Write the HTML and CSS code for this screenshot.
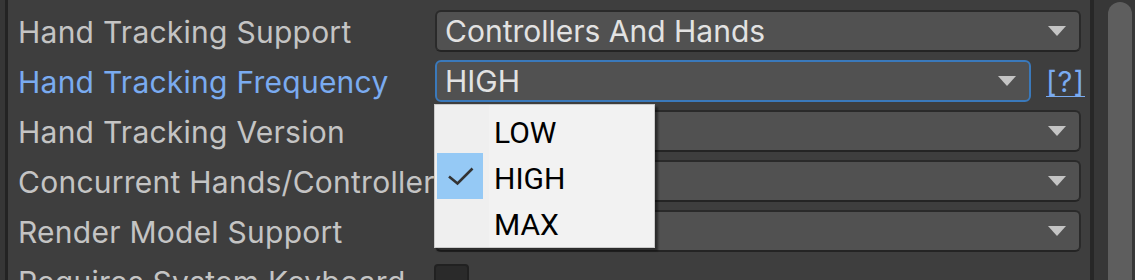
FILE: index.html
```html
<!DOCTYPE html>
<html lang="en">
<head>
    <meta charset="UTF-8">
    <meta name="viewport" content="width=device-width, initial-scale=1.0">
    <title>Hand Tracking Settings</title>
    <link rel="stylesheet" href="styles.css">
</head>
<body>
    <div class="inspector">
        <div class="edge"></div>

        <div class="fields">
            <div class="row">
                <span class="label">Hand Tracking Support</span>
                <div class="popup-field">
                    <span class="value">Controllers And Hands</span>
                    <i class="arrow"></i>
                </div>
            </div>

            <div class="row">
                <span class="label label-active">Hand Tracking Frequency</span>
                <div class="popup-field focused">
                    <span class="value">HIGH</span>
                    <i class="arrow"></i>
                </div>
                <a class="help" href="#">[?]</a>
            </div>

            <div class="row">
                <span class="label">Hand Tracking Version</span>
                <div class="popup-field">
                    <span class="value"></span>
                    <i class="arrow"></i>
                </div>
            </div>

            <div class="row">
                <span class="label">Concurrent Hands/Controllers</span>
                <div class="popup-field">
                    <span class="value"></span>
                    <i class="arrow"></i>
                </div>
            </div>

            <div class="row">
                <span class="label">Render Model Support</span>
                <div class="popup-field">
                    <span class="value"></span>
                    <i class="arrow"></i>
                </div>
            </div>

            <div class="row">
                <span class="label">Requires System Keyboard</span>
                <div class="toggle"></div>
            </div>
        </div>

        <div class="scroll">
            <div class="scroll-line"></div>
            <div class="scroll-track">
                <div class="scroll-thumb"></div>
            </div>
        </div>

        <!-- Open dropdown menu -->
        <ul class="menu">
            <li class="menu-item">
                <span class="check"></span>
                <span class="menu-text">LOW</span>
            </li>
            <li class="menu-item">
                <span class="check checked">
                    <svg width="46" height="46" viewBox="0 0 46 46">
                        <path d="M12 23.5 L20.5 30.5 L35.5 15.5" fill="none" stroke="#333" stroke-width="2.6"/>
                    </svg>
                </span>
                <span class="menu-text">HIGH</span>
            </li>
            <li class="menu-item">
                <span class="check"></span>
                <span class="menu-text">MAX</span>
            </li>
        </ul>
    </div>
</body>
</html>
```

FILE: styles.css
```css
body {
    margin: 0;
    padding: 0;
    background-color: #3e3e3e;
    font-family: Inter, "Noto Sans", sans-serif;
    overflow: hidden;
}

.inspector {
    display: flex;
    width: 1135px;
    height: 280px;
    overflow: hidden;
}

.edge {
    width: 5px;
    flex-shrink: 0;
    background-color: #363636;
    border-right: 3px solid #232323;
}

.fields {
    flex: 1;
    padding: 10px 0 0 10px;
}

.row {
    display: flex;
    align-items: center;
    height: 42px;
    margin-bottom: 8px;
}

.label {
    width: 417px;
    flex-shrink: 0;
    overflow: hidden;
    white-space: nowrap;
    padding-top: 1px;
    font-size: 30px;
    letter-spacing: 0.25px;
    color: #c4c4c4;
}

.label-active {
    color: #7aabf0;
}

.popup-field {
    flex: 1;
    display: flex;
    align-items: center;
    height: 38px;
    margin-right: 9px;
    padding-left: 8px;
    background-color: #515151;
    border: 2px solid #2a2a2a;
    border-bottom-color: #242424;
    border-radius: 6px;
    font-size: 30px;
    color: #e2e2e2;
}

.popup-field.focused {
    border-color: #3a79bb;
    margin-right: 0;
}

.value {
    white-space: nowrap;
}

.arrow {
    margin-left: auto;
    margin-right: 13px;
    width: 0;
    height: 0;
    border-left: 9px solid transparent;
    border-right: 9px solid transparent;
    border-top: 10px solid #c4c4c4;
}

.help {
    width: 36px;
    margin: 0 8px 0 15px;
    font-size: 29px;
    color: #7aabf0;
    text-decoration: underline;
    text-decoration-thickness: 1px;
    text-underline-offset: 4px;
    letter-spacing: 1px;
}

.toggle {
    width: 31px;
    height: 31px;
    margin-left: -1px;
    background-color: #2a2a2a;
    border: 2px solid #212121;
    border-radius: 4px;
}

.scroll {
    display: flex;
    width: 45px;
    flex-shrink: 0;
}

.scroll-line {
    width: 4px;
    background-color: #272727;
}

.scroll-track {
    flex: 1;
    padding: 2px 3px 0 14px;
    background-color: #373737;
}

.scroll-thumb {
    height: 400px;
    background-color: #5e5e5e;
    border-radius: 12px 12px 0 0;
}

/* dropdown menu, drawn over the fields */
.menu {
    position: absolute;
    left: 434px;
    top: 104px;
    width: 215px;
    margin: 0;
    padding: 2px;
    list-style: none;
    background: linear-gradient(to right, #efefef 54px, #f2f2f2 54px);
    border: 1px solid #cbcbcb;
    box-shadow: 3px 3px 2px rgba(0, 0, 0, 0.45);
    font-family: Roboto, "Noto Sans", sans-serif;
    font-size: 30px;
    color: #000;
}

.menu-item {
    display: flex;
    align-items: center;
    height: 46px;
}

.check {
    width: 46px;
    height: 46px;
    flex-shrink: 0;
}

.check.checked {
    background-color: #95c9f5;
}

.check svg {
    display: block;
}

.menu-text {
    margin-left: 11px;
    padding-top: 4px;
}
```
